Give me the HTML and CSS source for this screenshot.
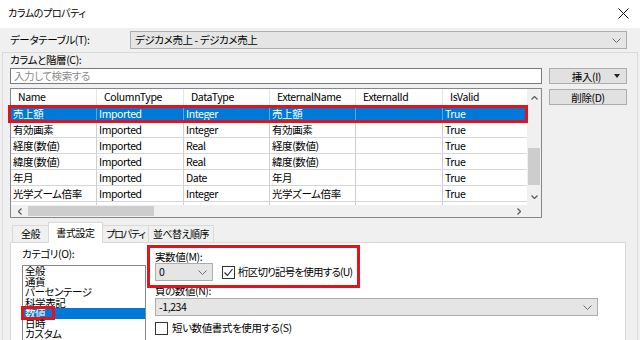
FILE: index.html
```html
<!DOCTYPE html>
<html lang="ja">
<head>
<meta charset="utf-8">
<title>カラムのプロパティ</title>
<link rel="stylesheet" href="styles.css">
</head>
<body>
<div class="window">
  <header class="titlebar">
    <span class="title">カラムのプロパティ</span>
    <svg class="close" viewBox="0 0 11 11" width="11" height="11"><path d="M0.5 0.5 L10.5 10.5 M10.5 0.5 L0.5 10.5" stroke="#111" stroke-width="1" fill="none"/></svg>
  </header>

  <div class="dt-row">
    <span class="lbl">データテーブル(T):</span>
    <div class="combo wide">
      <span>デジカメ売上 - デジカメ売上</span>
      <svg class="chev" viewBox="0 0 9 5" width="9" height="5"><path d="M0.5 0.5 L4.5 4.5 L8.5 0.5" stroke="#707070" fill="none"/></svg>
    </div>
  </div>

  <section class="columns">
    <div class="cols-lbl">カラムと階層(C):</div>
    <div class="search-row">
      <div class="search">入力して検索する</div>
      <button class="btn insert">挿入(I)<span class="tri"></span></button>
    </div>

    <div class="grid-row">
      <div class="grid">
        <div class="grid-view">
          <div class="row head">
            <div class="cell">Name</div><div class="cell">ColumnType</div><div class="cell">DataType</div><div class="cell">ExternalName</div><div class="cell">ExternalId</div><div class="cell">IsValid</div>
          </div>
          <div class="row sel">
            <div class="cell">売上額</div><div class="cell">Imported</div><div class="cell">Integer</div><div class="cell">売上額</div><div class="cell"></div><div class="cell">True</div>
          </div>
          <div class="row">
            <div class="cell">有効画素</div><div class="cell">Imported</div><div class="cell">Integer</div><div class="cell">有効画素</div><div class="cell"></div><div class="cell">True</div>
          </div>
          <div class="row">
            <div class="cell">経度(数値)</div><div class="cell">Imported</div><div class="cell">Real</div><div class="cell">経度(数値)</div><div class="cell"></div><div class="cell">True</div>
          </div>
          <div class="row">
            <div class="cell">緯度(数値)</div><div class="cell">Imported</div><div class="cell">Real</div><div class="cell">緯度(数値)</div><div class="cell"></div><div class="cell">True</div>
          </div>
          <div class="row">
            <div class="cell">年月</div><div class="cell">Imported</div><div class="cell">Date</div><div class="cell">年月</div><div class="cell"></div><div class="cell">True</div>
          </div>
          <div class="row">
            <div class="cell">光学ズーム倍率</div><div class="cell">Imported</div><div class="cell">Integer</div><div class="cell">光学ズーム倍率</div><div class="cell"></div><div class="cell">True</div>
          </div>
          <div class="row">
            <div class="cell">手ぶれ補正機能</div><div class="cell">Imported</div><div class="cell">String</div><div class="cell">手ぶれ補正機能</div><div class="cell"></div><div class="cell">True</div>
          </div>
        </div>
        <div class="vscroll">
          <div class="arrow"><svg viewBox="0 0 7 4" width="7" height="4"><path d="M0.5 3.5 L3.5 0.5 L6.5 3.5" stroke="#606060" stroke-width="1.3" fill="none"/></svg></div>
          <div class="vtrack"><div class="vthumb"></div></div>
          <div class="arrow"><svg viewBox="0 0 7 4" width="7" height="4"><path d="M0.5 0.5 L3.5 3.5 L6.5 0.5" stroke="#606060" stroke-width="1.3" fill="none"/></svg></div>
        </div>
        <div class="hscroll">
          <div class="harrow"><svg viewBox="0 0 4 7" width="4" height="7"><path d="M3.5 0.5 L0.5 3.5 L3.5 6.5" stroke="#606060" stroke-width="1.3" fill="none"/></svg></div>
          <div class="htrack"><div class="hthumb"></div></div>
          <div class="harrow"><svg viewBox="0 0 4 7" width="4" height="7"><path d="M0.5 0.5 L3.5 3.5 L0.5 6.5" stroke="#606060" stroke-width="1.3" fill="none"/></svg></div>
        </div>
        <div class="corner"></div>
        <div class="mark mark-row"></div>
      </div>
      <div class="side">
        <button class="btn">削除(D)</button>
      </div>
    </div>

    <nav class="tabs">
      <span class="tab t1">全般</span>
      <span class="tab active">書式設定</span>
      <span class="tab t3">プロパティ</span>
      <span class="tab t4">並べ替え順序</span>
    </nav>

    <div class="panel">
      <div class="cat-col">
        <div class="plbl">カテゴリ(O):</div>
        <ul class="listbox">
          <li>全般</li>
          <li>通貨</li>
          <li>パーセンテージ</li>
          <li>科学表記</li>
          <li class="on">数値<span class="mark mark-item"></span></li>
          <li>日時</li>
          <li>カスタム</li>
        </ul>
      </div>
      <div class="fmt-col">
        <div class="flbl">実数値(M):</div>
        <div class="dec-row">
          <div class="combo small">
            <span>0</span>
            <svg class="chev" viewBox="0 0 9 5" width="9" height="5"><path d="M0.5 0.5 L4.5 4.5 L8.5 0.5" stroke="#707070" fill="none"/></svg>
          </div>
          <label class="check first"><span class="box"><svg viewBox="0 0 11 11" width="11" height="11"><path d="M1.5 5.5 L4.5 8.5 L9.5 2" stroke="#222" stroke-width="1.1" fill="none"/></svg></span>桁区切り記号を使用する(U)</label>
        </div>
        <div class="flbl neg">負の数値(N):</div>
        <div class="combo negc">
          <span>-1,234</span>
          <svg class="chev" viewBox="0 0 9 5" width="9" height="5"><path d="M0.5 0.5 L4.5 4.5 L8.5 0.5" stroke="#707070" fill="none"/></svg>
        </div>
        <label class="check second"><span class="box"></span>短い数値書式を使用する(S)</label>
      </div>
      <div class="mark mark-fmt"></div>
    </div>
  </section>
</div>
</body>
</html>
```
FILE: styles.css
```css
* { box-sizing: border-box; }
html, body { margin: 0; padding: 0; }
body {
  width: 640px;
  height: 340px;
  overflow: hidden;
  background: #f0f0f0;
  font-family: "Noto Sans CJK JP", "Noto Sans", sans-serif;
  font-size: 10.5px;
  letter-spacing: -0.4px;
  font-feature-settings: "palt";
  color: #000;
}
.window { width: 640px; height: 340px; overflow: hidden; }

.titlebar {
  height: 28px;
  background: #fff;
  display: flex;
  align-items: center;
  justify-content: space-between;
  padding: 0 11px 2px 8px;
}
.title { line-height: 14px; font-size: 10px; }
.close { display: block; }

.dt-row {
  height: 24px;
  display: flex;
  align-items: flex-start;
  padding: 3px 13px 0 10px;
}
.dt-row .lbl { width: 120px; line-height: 18px; }

.combo {
  height: 18px;
  background: #e5e5e5;
  border: 1px solid #adadad;
  display: flex;
  align-items: center;
  justify-content: space-between;
  padding: 0 5px 0 3px;
  line-height: 14px;
}
.combo.wide { flex: 1; padding-left: 4px; }
.chev { display: block; }

.columns {
  margin: 0 2px;
  border-top: 1px solid #dadada;
  border-left: 1px solid #dadada;
  border-right: 1px solid #dadada;
  padding: 0 10px 0 7px;
  height: 312px;
}
.cols-lbl { line-height: 14px; }

.search-row {
  margin-top: 1px;
  display: flex;
  gap: 7px;
  height: 16px;
}
.search {
  width: 532px;
  height: 16px;
  background: #fff;
  border: 1px solid #7a7a7a;
  color: #8c8c8c;
  line-height: 14px;
  padding-left: 3px;
}
.btn {
  font: inherit;
  letter-spacing: inherit;
  width: 78px;
  height: 16px;
  padding: 0;
  background: #e1e1e1;
  border: 1px solid #adadad;
  color: #000;
  line-height: 13px;
  display: flex;
  align-items: center;
  justify-content: center;
}
.btn.insert { justify-content: flex-end; padding-right: 6px; }
.tri {
  margin-left: 13px;
  width: 0; height: 0;
  border-left: 3.5px solid transparent;
  border-right: 3.5px solid transparent;
  border-top: 4px solid #222;
}

.grid-row {
  margin-top: 4px;
  display: flex;
  gap: 7px;
}
.side { padding-top: 1px; }

.grid {
  position: relative;
  width: 532px;
  height: 130px;
  border: 1px solid #828790;
  background: #fff;
  display: grid;
  grid-template-columns: 516px 14px;
  grid-template-rows: 116px 12px;
}
.grid-view { overflow: hidden; }
.row {
  display: grid;
  grid-template-columns: 86px 87px 86px 86px 87px 85px;
  height: 16px;
  width: 517px;
}
.cell {
  border-right: 1px solid #cfcfcf;
  border-bottom: 1px solid #d6d6d6;
  padding-left: 2px;
  line-height: 15px;
  white-space: nowrap;
  overflow: hidden;
}
.row.head { height: 17px; }
.row.head .cell {
  padding-left: 7px;
  line-height: 16px;
  border-right-color: #e5e5e5;
  border-bottom-color: #e5e5e5;
}
.row.sel { background: #0078d7; color: #fff; }
.row.sel .cell { border-right-color: #5aa6e3; border-bottom-color: #0078d7; }

.vscroll {
  background: #f0f0f0;
  display: flex;
  flex-direction: column;
  grid-row: 1;
  grid-column: 2;
}
.arrow { height: 17px; display: flex; align-items: center; justify-content: center; }
.vtrack { flex: 1; padding: 42px 1px 0 1px; }
.vthumb { height: 37px; background: #cdcdcd; }

.hscroll { background: #f0f0f0; display: flex; }
.harrow { width: 17px; display: flex; align-items: center; justify-content: center; }
.htrack { flex: 1; padding: 1px 0; }
.hthumb { width: 126px; height: 10px; background: #cdcdcd; }
.corner { background: #f0f0f0; }

.mark { position: absolute; border: 3px solid #e3121b; }
.mark-row { left: -3px; top: 16px; width: 520px; height: 18px; }

.tabs {
  margin-top: 4px;
  height: 20px;
  display: flex;
  align-items: flex-end;
  padding-left: 2px;
  position: relative;
  z-index: 1;
}
.tab {
  height: 17px;
  line-height: 16px;
  border: 1px solid #d9d9d9;
  border-bottom: none;
  background: #f0f0f0;
  margin-right: -1px;
  white-space: nowrap;
  text-align: center;
  padding: 0;
  font-size: 10px;
  overflow: hidden;
}
.t1 { width: 37px; }
.tab.active {
  height: 21px;
  width: 55px;
  line-height: 19px;
  background: #fff;
  margin-bottom: -1px;
}
.t3 { width: 47px; letter-spacing: -1.2px; }
.t4 { width: 66px; letter-spacing: -0.5px; }

.panel {
  position: relative;
  width: 616px;
  height: 100px;
  background: #fff;
  border: 1px solid #d9d9d9;
  display: flex;
}
.cat-col { width: 135px; padding: 4px 0 0 11px; }
.plbl { line-height: 14px; }
.listbox {
  list-style: none;
  margin: 4px 0 0 0;
  padding: 0;
  width: 124px;
  height: 90px;
  border: 1px solid #828790;
  background: #fff;
}
.listbox li {
  position: relative;
  line-height: 10.5px;
  height: 10.5px;
  padding-left: 2px;
}
.listbox li.on { background: #0078d7; color: #fff; }
.mark-item { left: -2px; top: -2px; width: 34px; height: 14px; }

.fmt-col { padding: 7px 0 0 9px; }
.flbl { line-height: 13px; }
.dec-row { display: flex; align-items: center; height: 18px; }
.combo.small { width: 58px; }
.check { display: flex; align-items: center; line-height: 14px; white-space: nowrap; }
.box {
  width: 13px; height: 13px;
  border: 1px solid #333;
  background: #fff;
  display: flex; align-items: center; justify-content: center;
  margin-right: 3px;
}
.check.first { margin-left: 9px; letter-spacing: -0.8px; }
.flbl.neg { margin-top: 3px; }
.combo.negc { width: 443px; margin-top: 1px; }
.check.second { margin-top: 5px; }
.check.second .box { margin-right: 4px; }
.mark-fmt { left: 136px; top: 2px; width: 213px; height: 43px; }
```
